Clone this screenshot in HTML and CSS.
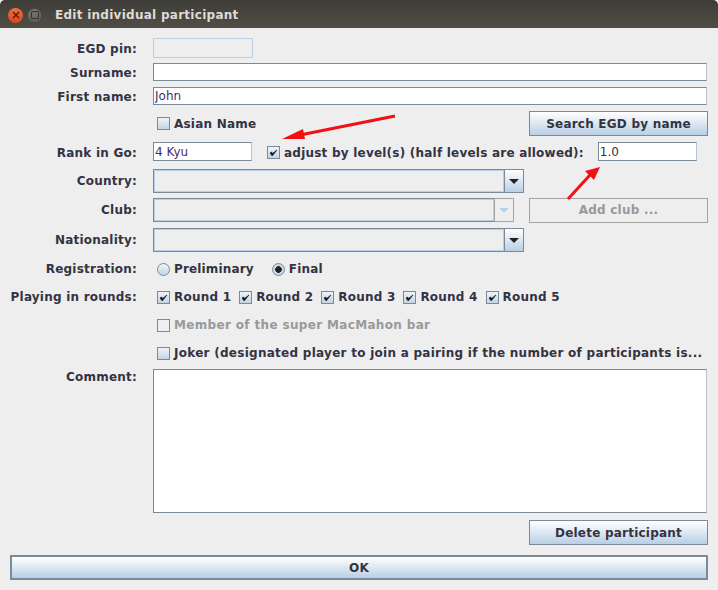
FILE: index.html
```html
<!DOCTYPE html>
<html lang="en">
<head>
<meta charset="utf-8">
<title>Edit individual participant</title>
<link rel="stylesheet" href="styles.css">
</head>
<body>
<div class="window">
  <header class="titlebar">
    <span class="wbtn close"><svg width="8" height="8" viewBox="0 0 8 8"><path d="M1 1L7 7M7 1L1 7" stroke="#4a1a0a" stroke-width="1.3"/></svg></span>
    <span class="wbtn max"><span class="maxmark"></span></span>
    <span class="wintitle">Edit individual participant</span>
  </header>
  <main class="form">
    <div class="row r-pin"><label class="lbl">EGD pin:</label><div class="pin"></div></div>
    <div class="row r-text"><label class="lbl">Surname:</label><input class="input grow" type="text"></div>
    <div class="row r-first"><label class="lbl">First name:</label><input class="input grow" type="text" value="John"></div>
    <div class="row r-asian"><span class="lbl"></span>
      <div class="checks between">
        <label class="chk"><span class="box"></span>Asian Name</label>
        <button class="btn wide">Search EGD by name</button>
      </div>
    </div>
    <div class="row r-rank"><label class="lbl">Rank in Go:</label>
      <input class="input small" type="text" value="4 Kyu">
      <label class="chk adjust"><span class="box on"><svg width="9" height="9" viewBox="0 0 9 9"><path d="M1 5L3.2 8L8 2L3.6 5.4L2.6 4Z" fill="#111" stroke="#111" stroke-width=".6"/></svg></span>adjust by level(s) (half levels are allowed):</label>
      <input class="input small level" type="text" value="1.0">
    </div>
    <div class="row r-combo r-country"><label class="lbl">Country:</label>
      <div class="combo"><div class="combo-field"></div><div class="combo-btn"><span class="tri"></span></div></div>
    </div>
    <div class="row r-combo r-club"><label class="lbl">Club:</label>
      <div class="combo off"><div class="combo-field"></div><div class="combo-btn"><span class="tri"></span></div></div>
      <button class="btn wide disabled" disabled>Add club ...</button>
    </div>
    <div class="row r-combo r-nat"><label class="lbl">Nationality:</label>
      <div class="combo"><div class="combo-field"></div><div class="combo-btn"><span class="tri"></span></div></div>
    </div>
    <div class="row r-reg"><label class="lbl">Registration:</label>
      <div class="checks">
        <label class="chk prelim"><span class="radio"></span>Preliminary</label>
        <label class="chk"><span class="radio on"></span>Final</label>
      </div>
    </div>
    <div class="row r-opt r-rounds"><label class="lbl">Playing in rounds:</label>
      <div class="checks rounds">
        <label class="chk"><span class="box on"><svg width="9" height="9" viewBox="0 0 9 9"><path d="M1 5L3.2 8L8 2L3.6 5.4L2.6 4Z" fill="#111" stroke="#111" stroke-width=".6"/></svg></span>Round 1</label>
        <label class="chk"><span class="box on"><svg width="9" height="9" viewBox="0 0 9 9"><path d="M1 5L3.2 8L8 2L3.6 5.4L2.6 4Z" fill="#111" stroke="#111" stroke-width=".6"/></svg></span>Round 2</label>
        <label class="chk"><span class="box on"><svg width="9" height="9" viewBox="0 0 9 9"><path d="M1 5L3.2 8L8 2L3.6 5.4L2.6 4Z" fill="#111" stroke="#111" stroke-width=".6"/></svg></span>Round 3</label>
        <label class="chk"><span class="box on"><svg width="9" height="9" viewBox="0 0 9 9"><path d="M1 5L3.2 8L8 2L3.6 5.4L2.6 4Z" fill="#111" stroke="#111" stroke-width=".6"/></svg></span>Round 4</label>
        <label class="chk"><span class="box on"><svg width="9" height="9" viewBox="0 0 9 9"><path d="M1 5L3.2 8L8 2L3.6 5.4L2.6 4Z" fill="#111" stroke="#111" stroke-width=".6"/></svg></span>Round 5</label>
      </div>
    </div>
    <div class="row r-opt"><span class="lbl"></span>
      <div class="checks"><label class="chk dis"><span class="box blank"></span>Member of the super MacMahon bar</label></div>
    </div>
    <div class="row r-opt"><span class="lbl"></span>
      <div class="checks"><label class="chk joker"><span class="box"></span>Joker (designated player to join a pairing if the number of participants is...</label></div>
    </div>
    <div class="row r-comment"><label class="lbl">Comment:</label><textarea class="area"></textarea></div>
    <div class="row r-delete"><button class="btn wide">Delete participant</button></div>
    <button class="btn ok">OK</button>
  </main>
  <svg class="arrows" width="718" height="590" viewBox="0 0 718 590" aria-hidden="true">
    <path d="M395 116L300 135" stroke="#f40f12" stroke-width="3" fill="none"/>
    <path d="M282 139L303 129L305 139Z" fill="#f40f12"/>
    <path d="M568 199L590 175" stroke="#f40f12" stroke-width="3" fill="none"/>
    <path d="M600 167L594 180L585 171Z" fill="#f40f12"/>
  </svg>
</div>
</body>
</html>
```
FILE: styles.css
```css
* { box-sizing: border-box; }
html, body { margin: 0; padding: 0; }
body { width: 718px; height: 590px; overflow: hidden; background: #eeeeee; }
.window {
  position: relative;
  width: 718px;
  height: 590px;
  font-family: "DejaVu Sans", sans-serif;
  font-size: 12px;
  letter-spacing: .22px;
  font-weight: 700;
  color: #333344;
  background: #eeeeee;
}
.titlebar {
  display: flex;
  align-items: center;
  height: 28px;
  padding: 2px 0 0 8px;
  background: linear-gradient(#3d3c37, #514e47);
  border-radius: 5px 5px 0 0;
}
.wbtn {
  display: flex;
  flex: none;
  align-items: center;
  justify-content: center;
  width: 15px;
  height: 15px;
  border-radius: 50%;
}
.close { background: linear-gradient(#f0703f, #d8471c); }
.max { margin-left: 4px; background: linear-gradient(#7a7873, #5f5d58); border: 1px solid #4a4843; }
.maxmark { width: 8px; height: 8px; border: 1.5px solid #33322e; border-radius: 1px; }
.wintitle { margin-left: 13px; color: #dfdbd2; font-size: 12px; font-weight: 700; letter-spacing: .27px; }
.form { display: flex; flex-direction: column; padding: 0 10px; }
.row { display: flex; align-items: center; }
.lbl { flex: none; width: 127px; margin-right: 16px; padding-top: 2px; text-align: right; white-space: nowrap; }
.grow { flex: 1; margin-right: 1px; }
.r-pin { height: 20px; margin-top: 10px; }
.pin { width: 100px; height: 20px; border: 1px solid #b8cfe5; }
.r-text { height: 18px; margin-top: 5px; }
.r-first { height: 18px; margin-top: 6px; }
.r-asian { height: 25px; margin-top: 6px; }
.r-rank { height: 19px; margin-top: 6px; }
.r-combo { height: 24px; }
.r-combo .lbl, .r-reg .lbl, .r-opt .lbl { padding-top: 0; }
.r-comment .lbl { padding-top: 1px; }
.r-country { margin-top: 8px; }
.r-club { margin-top: 5px; }
.r-nat { margin-top: 6px; }
.r-reg { height: 20px; margin-top: 6px; padding-top: 2px; }
.r-opt { height: 20px; margin-top: 8px; padding-top: 2px; }
.r-comment { align-items: flex-start; height: 144px; margin-top: 7px; }
.r-delete { justify-content: flex-end; height: 25px; margin-top: 7px; }
.input {
  height: 18px;
  padding: 0 1px;
  border: 1px solid #7a8a99;
  border-right-color: #b8c4d0;
  background: #fff;
  color: #43305f;
  font: 400 12px "DejaVu Sans", sans-serif;
  outline: none;
  border-radius: 0;
}
.small { width: 99px; height: 19px; }
.level { margin-left: 14px; color: #333344; }
.checks { display: flex; align-items: center; padding-left: 4px; flex: 1; }
.between { justify-content: space-between; }
.rounds { gap: 7.9px; }
.chk { display: flex; align-items: center; white-space: nowrap; }
.prelim { margin-right: 18px; letter-spacing: .15px; }
.adjust { margin-left: 15px; padding-top: 2px; }
.dis { color: #999999; letter-spacing: .34px; }
.joker { letter-spacing: .27px; }
.box {
  display: flex;
  align-items: center;
  justify-content: center;
  flex: none;
  width: 13px;
  height: 13px;
  margin-right: 4px;
  border: 1px solid #7a8a99;
  background: linear-gradient(#eef3f8, #c3d4e6);
}
.blank { background: #eeeeee; }
.radio {
  flex: none;
  width: 13px;
  height: 13px;
  margin-right: 4px;
  border: 1px solid #7a8a99;
  border-radius: 50%;
  background: linear-gradient(#f0f4f8, #c3d4e6);
}
.radio.on { background: radial-gradient(circle, #222 0 3px, #c8d8e8 3.6px); }
.combo { display: flex; width: 371px; height: 24px; }
.combo-field {
  flex: 1;
  border: 1px solid #7a8a99;
  box-shadow: inset 0 0 0 1px #b8cfe5;
  border-right: 0;
}
.combo-btn {
  display: flex;
  align-items: center;
  justify-content: center;
  width: 20px;
  border: 1px solid #7a8a99;
  background: linear-gradient(#ffffff, #b8cfe5);
}
.tri {
  width: 0;
  height: 0;
  border-left: 5px solid transparent;
  border-right: 5px solid transparent;
  border-top: 5px solid #222222;
}
.combo.off { width: 361px; margin-right: 15px; }
.off .combo-btn { background: #eeeeee; border-color: #a3a3a3; }
.off .tri { border-top-color: #b8cfe5; }
.btn {
  height: 25px;
  border: 1px solid #7a8a99;
  background: linear-gradient(#ffffff, #eef3f8 25%, #b8cfe5);
  color: #333344;
  font: 700 12px "DejaVu Sans", sans-serif;
  letter-spacing: .22px;
  padding: 0;
  border-radius: 0;
}
.wide { width: 179px; }
.disabled { background: #eeeeee; border-color: #a3a3a3; color: #999999; }
.ok { width: 698px; margin-top: 10px; border: 2px solid #7a8a99; }
.area {
  flex: 1;
  height: 144px;
  margin-right: 1px;
  border: 1px solid #7a8a99;
  border-right-color: #b8c4d0;
  background: #fff;
  resize: none;
  outline: none;
  border-radius: 0;
}
.arrows { position: absolute; left: 0; top: 0; pointer-events: none; }
```
